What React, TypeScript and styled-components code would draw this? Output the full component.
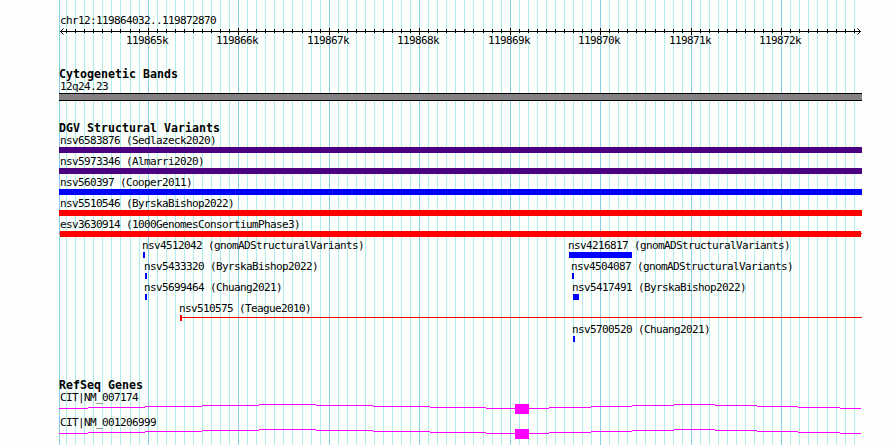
import styled, { createGlobalStyle } from "styled-components";

const START = 119864032;
const END = 119872870;
const TRACK_LEFT = 59;
const TRACK_WIDTH = 803;

const toX = (bp: number) => Math.round(1 + ((bp - START) * 800) / (END - START));

const minorTicks = Array.from({ length: 88 }, (_, i) => 119864100 + i * 100);
const majorTicks = minorTicks.filter((bp) => bp % 1000 === 0);

const GlobalStyle = createGlobalStyle`
  body {
    margin: 0;
    background: #fdfffc;
    overflow: hidden;
  }
`;

const Browser = styled.main`
  position: relative;
  width: 890px;
  height: 445px;
  overflow: hidden;
  background: #fdfffc;
  color: #000;
  font-family: "DejaVu Sans Mono", "Liberation Mono", monospace;
`;

const GridLines = styled.svg`
  position: absolute;
  top: 0;
  left: ${TRACK_LEFT}px;
`;

const Tracks = styled.div`
  position: relative;
  width: ${TRACK_WIDTH}px;
  margin-left: ${TRACK_LEFT}px;
  padding-top: 14px;
`;

const Label = styled.div<{ $offset?: number }>`
  height: 13px;
  margin-left: ${({ $offset = 1 }) => $offset}px;
  font-size: 11px;
  line-height: 13px;
  letter-spacing: -0.622px;
  white-space: pre;
`;

const Ruler = styled.svg`
  display: block;
  overflow: visible;

  text {
    font-size: 11px;
    letter-spacing: -0.622px;
  }
`;

const Track = styled.section<{ $gap: number }>`
  margin-top: ${({ $gap }) => $gap}px;
`;

const Title = styled.h2`
  height: 12px;
  margin: 0;
  font-size: 11.6px;
  font-weight: 700;
  line-height: 13px;
  letter-spacing: 0.016px;
  white-space: pre;
`;

const Band = styled.div`
  height: 6px;
  background: #848084;
  border-top: 1px solid #000;
  border-bottom: 1px solid #000;
`;

const Row = styled.div`
  display: grid;
  height: 21px;
`;

const Feature = styled.div`
  grid-area: 1 / 1;
`;

const Bar = styled.div<{ $color: string }>`
  height: 6px;
  background: ${({ $color }) => $color};
`;

const Span = styled.svg`
  display: block;
`;

const Gene = styled.div`
  height: 25px;
`;

const GeneModel = styled.svg`
  display: block;
`;

type Variant = {
  name: string;
  x: number;
  width: number;
  color: string;
  offset?: number;
  kind?: "open" | "clipped";
};

const INDIGO = "#4b0082";
const BLUE = "#0000ff";
const RED = "#ff0000";

const rows: Variant[][] = [
  [{ name: "nsv6583876 (Sedlazeck2020)", x: 0, width: 803, color: INDIGO }],
  [{ name: "nsv5973346 (Almarri2020)", x: 0, width: 803, color: INDIGO }],
  [{ name: "nsv560397 (Cooper2011)", x: 0, width: 803, color: BLUE }],
  [{ name: "nsv5510546 (ByrskaBishop2022)", x: 0, width: 803, color: RED }],
  [{ name: "esv3630914 (1000GenomesConsortiumPhase3)", x: 0, width: 803, color: RED, kind: "clipped" }],
  [
    { name: "nsv4512042 (gnomADStructuralVariants)", x: 84, width: 2, color: BLUE, offset: -1 },
    { name: "nsv4216817 (gnomADStructuralVariants)", x: 510, width: 63, color: BLUE, offset: -1 },
  ],
  [
    { name: "nsv5433320 (ByrskaBishop2022)", x: 86, width: 2, color: BLUE, offset: -1 },
    { name: "nsv4504087 (gnomADStructuralVariants)", x: 513, width: 2, color: BLUE, offset: -1 },
  ],
  [
    { name: "nsv5699464 (Chuang2021)", x: 86, width: 2, color: BLUE, offset: -1 },
    { name: "nsv5417491 (ByrskaBishop2022)", x: 514, width: 6, color: BLUE, offset: -1 },
  ],
  [{ name: "nsv510575 (Teague2010)", x: 121, width: 682, color: RED, offset: -1, kind: "open" }],
  [{ name: "nsv5700520 (Chuang2021)", x: 514, width: 2, color: BLUE, offset: -1 }],
];

// intron hat segments: [start, end, height above baseline]
const introns = [
  [0, 29, 0], [29, 86, 1], [86, 143, 2], [143, 200, 3], [200, 257, 4],
  [257, 314, 3], [314, 371, 2], [371, 427, 1], [427, 456, 0],
  [470, 490, 0], [490, 532, 1], [532, 573, 2], [573, 615, 3], [615, 656, 4],
  [656, 698, 3], [698, 739, 2], [739, 781, 1], [781, 802, 0],
];

function VariantGlyph({ variant }: { variant: Variant }) {
  const { kind, width, color } = variant;
  if (kind === "open") {
    return (
      <Span width={width} height={6} shapeRendering="crispEdges">
        <rect width={2} height={6} fill={color} />
        <rect y={2} width={width} height={1} fill={color} />
      </Span>
    );
  }
  if (kind === "clipped") {
    return (
      <Span width={width} height={6} shapeRendering="crispEdges">
        <rect y={2} width={width} height={1} fill={color} />
        <rect x={1} width={width - 2} height={6} fill={color} />
      </Span>
    );
  }
  return <Bar $color={color} style={{ width }} />;
}

export default function App() {
  return (
    <>
      <GlobalStyle />
      <Browser>
        <GridLines width={TRACK_WIDTH} height={445} shapeRendering="crispEdges">
          {minorTicks.map((bp) => (
            <rect key={bp} x={toX(bp)} width={1} height={445} fill={bp % 1000 ? "#afeeee" : "#87ceeb"} />
          ))}
          <rect width={1} height={445} fill="#87ceeb" />
        </GridLines>

        <Tracks>
          <Label>chr12:119864032..119872870</Label>
          <Ruler width={TRACK_WIDTH} height={20}>
            <g shapeRendering="crispEdges">
              <rect x={1} y={4} width={801} height={1} />
              {minorTicks.map((bp) => (
                <rect
                  key={bp}
                  x={toX(bp)}
                  y={bp % 1000 ? 2 : 1}
                  width={1}
                  height={bp % 1000 ? 4 : 7}
                />
              ))}
            </g>
            <path d="M4.5 1.5l-3 3 3 3M798.5 1.5l3 3-3 3" fill="none" stroke="#000" />
            {majorTicks.map((bp) => (
              <text key={bp} x={toX(bp) - 22} y={17}>
                {bp / 1000}k
              </text>
            ))}
          </Ruler>

          <Track $gap={21}>
            <Title>Cytogenetic Bands</Title>
            <Label>12q24.23</Label>
            <Band />
          </Track>

          <Track $gap={21}>
            <Title>DGV Structural Variants</Title>
            {rows.map((row) => (
              <Row key={row[0].name}>
                {row.map((variant) => (
                  <Feature key={variant.name} style={{ marginLeft: variant.x }}>
                    <Label $offset={variant.offset}>{variant.name}</Label>
                    <VariantGlyph variant={variant} />
                  </Feature>
                ))}
              </Row>
            ))}
          </Track>

          <Track $gap={35}>
            <Title>RefSeq Genes</Title>
            {["CIT|NM_007174", "CIT|NM_001206999"].map((name) => (
              <Gene key={name}>
                <Label>{name}</Label>
                <GeneModel width={TRACK_WIDTH} height={10} fill="#ff00ff" shapeRendering="crispEdges">
                  {introns.map(([from, to, rise]) => (
                    <rect key={from} x={from} y={4 - rise} width={to - from} height={1} />
                  ))}
                  <rect x={456} width={14} height={10} />
                </GeneModel>
              </Gene>
            ))}
          </Track>
        </Tracks>
      </Browser>
    </>
  );
}
